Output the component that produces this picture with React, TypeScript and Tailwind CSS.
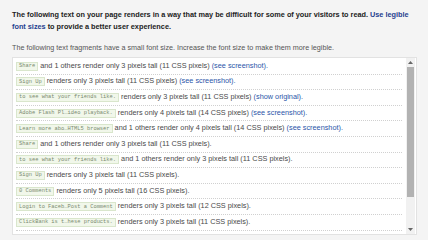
import React from 'react';

export default function App() {
  const rows = [
    { code: 'Share', text: ' and 1 others render only 3 pixels tall (11 CSS pixels) ', link: '(see screenshot).' },
    { code: 'Sign Up', text: ' renders only 3 pixels tall (11 CSS pixels) ', link: '(see screenshot).' },
    { code: 'to see what your friends like.', text: ' renders only 3 pixels tall (11 CSS pixels) ', link: '(show original).' },
    { code: 'Adobe Flash Pl…ideo playback.', text: ' renders only 4 pixels tall (14 CSS pixels) ', link: '(see screenshot).' },
    { code: 'Learn more abo…HTML5 browser', text: ' and 1 others render only 4 pixels tall (14 CSS pixels) ', link: '(see screenshot).' },
    { code: 'Share', text: ' and 1 others render only 3 pixels tall (11 CSS pixels).', link: '' },
    { code: 'to see what your friends like.', text: ' and 1 others render only 3 pixels tall (11 CSS pixels).', link: '' },
    { code: 'Sign Up', text: ' renders only 3 pixels tall (11 CSS pixels).', link: '' },
    { code: '0 Comments', text: ' renders only 5 pixels tall (16 CSS pixels).', link: '' },
    { code: 'Login to Faceb…Post a Comment', text: ' renders only 3 pixels tall (12 CSS pixels).', link: '' },
    { code: 'ClickBank is t…hese products.', text: ' renders only 3 pixels tall (11 CSS pixels).', link: '' },
  ];

  return (
    <div className="w-[428px] h-[240px] overflow-hidden bg-[#f4f4f4] font-['Liberation_Sans',Arial,sans-serif]">
      <div className="pl-[12px] pr-[11px] pt-[9px]">
        {/* Header */}
        <p className="text-[7.3px] leading-[12px] font-bold text-[#222]">
          The following text on your page renders in a way that may be difficult for some of your visitors to read.{' '}
          <span className="text-[#1f3f8f]">Use legible font sizes</span> to provide a better user experience.
        </p>
        <p className="mt-[10px] text-[7.2px] leading-[10px] text-[#555]">
          The following text fragments have a small font size. Increase the font size to make them more legible.
        </p>

        {/* Fragment list */}
        <div className="mt-[4px] h-[178px] flex bg-white border border-[#e2e2e2]">
          <div className="flex-1 pl-[3px] pr-[4px] pt-[1px]">
            {rows.map((r, i) => (
              <div key={i} className="h-[15.6px] flex items-center border-b border-dotted border-[#d0d0d0] text-[7.3px] text-[#4a4a4a] whitespace-nowrap">
                <span className="px-[2px] h-[9px] flex items-center bg-[#f1f7ea] border border-[#d9e6cc] text-[#7a8a70] text-[5.4px] font-['Liberation_Mono',monospace]">
                  {r.code}
                </span>
                <span className="whitespace-pre">{r.text}</span>
                {r.link && <span className="text-[#2a55a8]">{r.link}</span>}
              </div>
            ))}
          </div>
          {/* Scrollbar */}
          <div className="w-[9px] mr-[1px] flex flex-col items-center bg-[#f1f1f1]">
            <div className="h-[9px] flex items-center justify-center">
              <svg width="5" height="3" viewBox="0 0 5 3"><path d="M0 3 L2.5 0 L5 3 Z" fill="#666" /></svg>
            </div>
            <div className="w-[7px] h-[130px] bg-[#b2b2b2]" />
            <div className="flex-1" />
            <div className="h-[9px] flex items-center justify-center">
              <svg width="5" height="3" viewBox="0 0 5 3"><path d="M0 0 L2.5 3 L5 0 Z" fill="#666" /></svg>
            </div>
          </div>
        </div>
      </div>
    </div>
  );
}
